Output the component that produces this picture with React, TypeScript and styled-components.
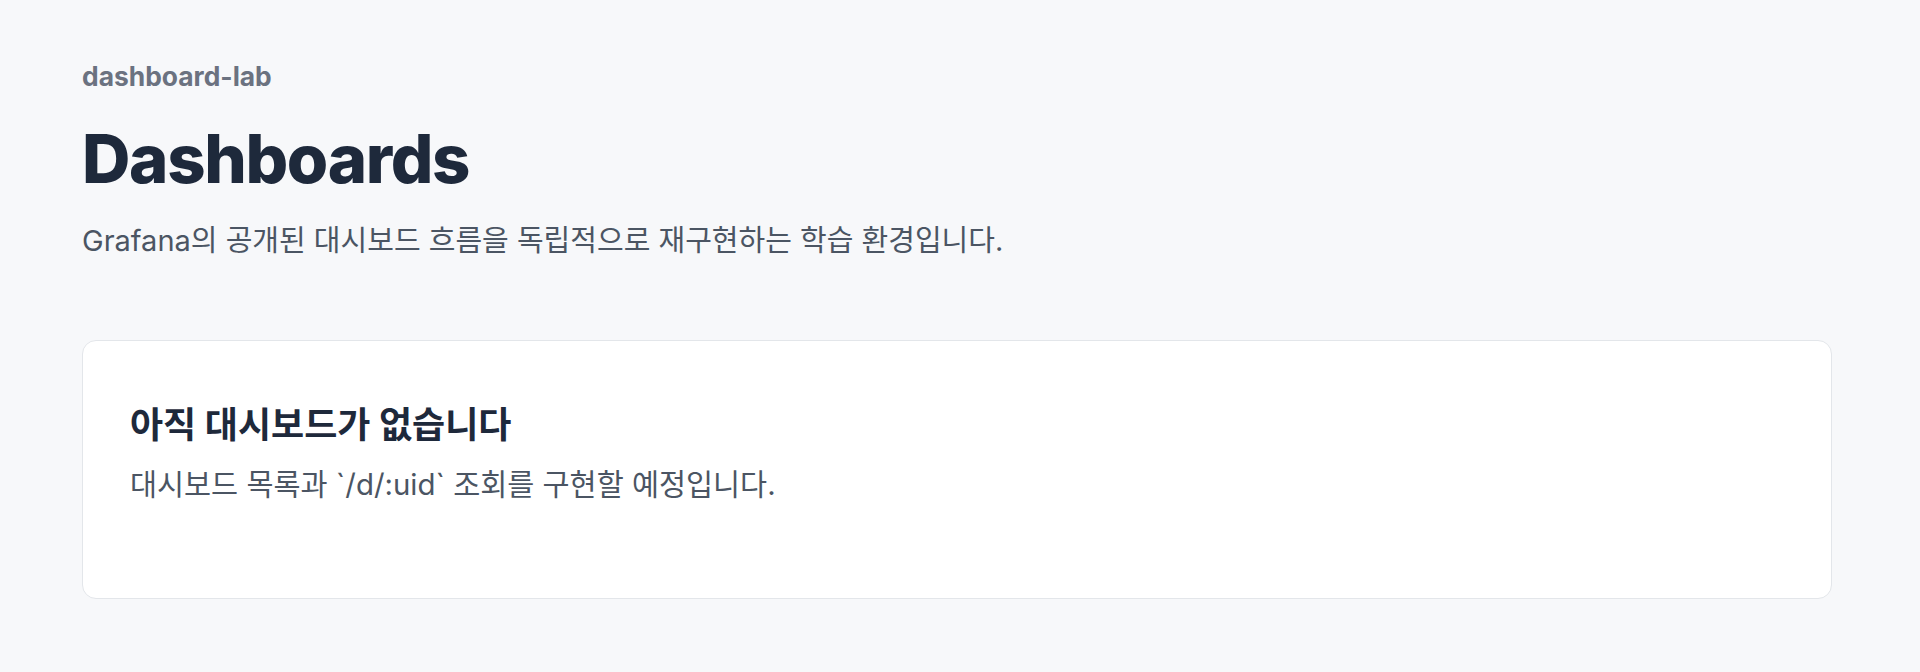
import React from "react";
import styled, { createGlobalStyle } from "styled-components";

const GlobalStyle = createGlobalStyle`
  html, body {
    margin: 0;
    padding: 0;
    background: #f7f8fa;
  }
  body {
    font-family: Inter, "Noto Sans CJK KR", "Noto Sans", sans-serif;
    -webkit-font-smoothing: antialiased;
  }
`;

const Page = styled.main`
  box-sizing: border-box;
  min-height: 672px;
  padding: 59px 88px 60px 82px;
  display: flex;
  flex-direction: column;
`;

const Header = styled.header`
  display: flex;
  flex-direction: column;
`;

const Eyebrow = styled.div`
  font-size: 26.4px;
  font-weight: 700;
  line-height: 34px;
  color: #6b7280;
`;

const Title = styled.h1`
  margin: 29px 0 0;
  font-size: 67px;
  font-weight: 800;
  line-height: 74px;
  letter-spacing: -0.02em;
  color: #1e293b;
`;

const Subtitle = styled.p`
  margin: 25px 0 0;
  font-size: 29px;
  line-height: 40px;
  color: #4b5563;
`;

const Card = styled.section`
  margin-top: 79px;
  box-sizing: border-box;
  height: 259px;
  background: #ffffff;
  border: 1px solid #e3e6ea;
  border-radius: 14px;
  padding: 61px 47px;
  display: flex;
  flex-direction: column;
`;

const CardTitle = styled.h2`
  margin: 0;
  font-size: 36px;
  font-weight: 700;
  line-height: 47px;
  color: #1e293b;
`;

const CardText = styled.p`
  margin: 16px 0 0;
  font-size: 29.4px;
  line-height: 40px;
  color: #4b5563;
`;

export default function App() {
  return (
    <>
      <GlobalStyle />
      <Page>
        <Header>
          <Eyebrow>dashboard-lab</Eyebrow>
          <Title>Dashboards</Title>
          <Subtitle>Grafana의 공개된 대시보드 흐름을 독립적으로 재구현하는 학습 환경입니다.</Subtitle>
        </Header>
        <Card>
          <CardTitle>아직 대시보드가 없습니다</CardTitle>
          <CardText>대시보드 목록과 `/d/:uid` 조회를 구현할 예정입니다.</CardText>
        </Card>
      </Page>
    </>
  );
}
